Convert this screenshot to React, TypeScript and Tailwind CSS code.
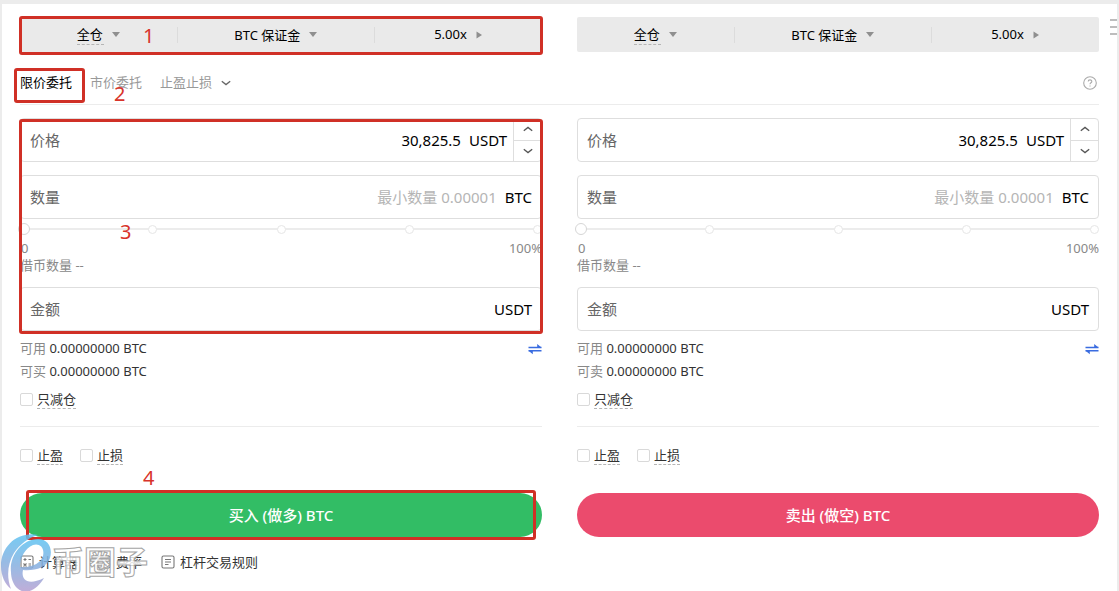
import { useState } from 'react';
import type { ReactNode } from 'react';

type Side = 'buy' | 'sell';

const sides: Record<Side, { max: string; submit: string; color: string }> = {
  buy: { max: '可买', submit: '买入 (做多) BTC', color: 'bg-[#32bd65]' },
  sell: { max: '可卖', submit: '卖出 (做空) BTC', color: 'bg-[#eb4b6d]' },
};

const sliderStops = [0, 25, 50, 75, 100];

/* Small filled triangle used by the margin selectors */
function Caret({ right = false }: { right?: boolean }) {
  return (
    <svg className="pointer-events-none h-2 w-2 shrink-0 text-[#8f8f8f]" viewBox="0 0 8 8" fill="currentColor" aria-hidden="true">
      {right ? <path d="M1.5 0.5 7 4 1.5 7.5z" /> : <path d="M0 1 8 1 4 6z" />}
    </svg>
  );
}

function Chevron({ up = false }: { up?: boolean }) {
  return (
    <svg className="h-[10px] w-[10px] shrink-0" viewBox="0 0 10 10" fill="none" stroke="currentColor" strokeWidth={1.3} aria-hidden="true">
      <path d={up ? 'M0.8 6.8 5 3.4 9.2 6.8' : 'M0.8 3.2 5 6.6 9.2 3.2'} />
    </svg>
  );
}

/* Numbered red callout frame, sized by the positioned parent */
function Mark({ label, frame, at }: { label: string; frame: string; at: string }) {
  return (
    <div className={`pointer-events-none absolute z-10 rounded-[3px] border-3 border-[#d03026] ${frame}`}>
      <span className={`absolute text-[20px] leading-6 text-[#d8332a] ${at}`}>{label}</span>
    </div>
  );
}

function MarginBar({ side }: { side: Side }) {
  return (
    <div className="relative">
      <div className="grid h-[35px] grid-cols-[30fr_38fr_32fr] items-center rounded-xs bg-[#eaeaea] text-black">
        <div className="flex items-center justify-center gap-2">
          <select
            aria-label="保证金模式"
            className="h-5 cursor-pointer appearance-none border-b border-dashed border-[#b5b5b5] bg-transparent leading-4"
          >
            <option>全仓</option>
          </select>
          <Caret />
        </div>
        <div className="flex h-4 items-center justify-center gap-2 border-x border-[#dcdcdc]">
          <select aria-label="保证金币种" className="cursor-pointer appearance-none bg-transparent leading-5">
            <option>BTC 保证金</option>
          </select>
          <Caret />
        </div>
        <button type="button" className="flex items-center justify-center gap-2">
          5.00x
          <Caret right />
        </button>
      </div>
      {side === 'buy' && <Mark label="1" frame="-inset-x-px -top-px -bottom-[3px]" at="left-[121px] top-[5px]" />}
    </div>
  );
}

function Field({ id, label, unit, children, steps }: {
  id: string;
  label: string;
  unit: string;
  children: ReactNode;
  steps?: ReactNode;
}) {
  return (
    <div className="flex h-11 items-stretch rounded-sm border border-[#dedede] text-[15px]">
      <label htmlFor={id} className="flex shrink-0 items-center pl-[9px] text-[#666]">{label}</label>
      <div className="flex min-w-0 flex-1 items-center">{children}</div>
      <span className={`flex items-center pl-2 text-black ${steps ? 'pr-[6px]' : 'pr-[9px]'}`}>{unit}</span>
      {steps}
    </div>
  );
}

function Check({ label }: { label: string }) {
  return (
    <label className="flex items-center gap-1 text-[#333]">
      <input type="checkbox" className="h-[13px] w-[13px] appearance-none rounded-xs border border-[#d9d9d9] bg-white checked:bg-[#333]" />
      <span className="border-b border-dashed border-[#b5b5b5] leading-[18px]">{label}</span>
    </label>
  );
}

function OrderForm({ side }: { side: Side }) {
  const [price, setPrice] = useState(30825.5);
  const [amount, setAmount] = useState('');
  const [total, setTotal] = useState('');
  const [percent, setPercent] = useState(0);
  const { max, submit, color } = sides[side];
  const inputClass = 'w-full min-w-0 bg-transparent text-right text-black outline-none placeholder:text-[#b5b5b5]';

  return (
    <form onSubmit={(e) => e.preventDefault()}>
      <div className="relative">
        <Field
          id={`${side}-price`}
          label="价格"
          unit="USDT"
          steps={
            <div className="flex w-7 flex-col border-l border-[#dedede] text-[#555]">
              <button
                type="button"
                aria-label="加"
                onClick={() => setPrice(price + 0.1)}
                className="flex flex-1 items-center justify-center border-b border-[#dedede]"
              >
                <Chevron up />
              </button>
              <button type="button" aria-label="减" onClick={() => setPrice(price - 0.1)} className="flex flex-1 items-center justify-center">
                <Chevron />
              </button>
            </div>
          }
        >
          <input
            id={`${side}-price`}
            className={inputClass}
            value={price.toLocaleString('en-US', { maximumFractionDigits: 1 })}
            onChange={(e) => setPrice(Number(e.target.value.replace(/,/g, '')) || 0)}
          />
        </Field>

        <div className="mt-[13px]">
          <Field id={`${side}-amount`} label="数量" unit="BTC">
            <input
              id={`${side}-amount`}
              className={inputClass}
              placeholder="最小数量 0.00001"
              value={amount}
              onChange={(e) => setAmount(e.target.value)}
            />
          </Field>
        </div>

        {/* Percent slider */}
        <div className="relative mt-1 -ml-[2px] flex h-3 items-center">
          <div className="absolute inset-x-1 h-[2px] bg-[#ececec]" />
          <div className="absolute inset-x-0 flex items-center justify-between pl-[2px]">
            {sliderStops.map((stop) => (
              <span key={stop} className="h-[9px] w-[9px] rounded-full border border-[#e6e6e6] bg-white" />
            ))}
          </div>
          <input
            type="range"
            aria-label="仓位百分比"
            value={percent}
            onChange={(e) => setPercent(Number(e.target.value))}
            className="relative h-3 w-full cursor-pointer appearance-none bg-transparent [&::-webkit-slider-thumb]:h-3 [&::-webkit-slider-thumb]:w-3 [&::-webkit-slider-thumb]:appearance-none [&::-webkit-slider-thumb]:rounded-full [&::-webkit-slider-thumb]:border [&::-webkit-slider-thumb]:border-[#d6d6d6] [&::-webkit-slider-thumb]:bg-white"
          />
        </div>
        <div className="mt-1 flex justify-between pl-px leading-[18px] text-[#888]">
          <span>0</span>
          <span>100%</span>
        </div>
        <p className="leading-4 text-[#888]">借币数量 --</p>

        <div className="mt-[14px]">
          <Field id={`${side}-total`} label="金额" unit="USDT">
            <input id={`${side}-total`} className={inputClass} value={total} onChange={(e) => setTotal(e.target.value)} />
          </Field>
        </div>
        {side === 'buy' && <Mark label="3" frame="-inset-x-px top-px -bottom-[3px]" at="left-[98px] top-[98px]" />}
      </div>

      {/* Balances */}
      <div className="mt-[6px] flex items-center justify-between leading-[23px]">
        <span className="text-[#333]"><span className="text-[#888]">可用</span> 0.00000000 BTC</span>
        <button type="button" aria-label="划转" className="text-[#3a6ce0]">
          <svg className="h-3 w-[14px]" viewBox="0 0 14 12" fill="none" stroke="currentColor" strokeWidth={1.5} aria-hidden="true">
            <path d="M0.5 4.4H13.5M0.5 7.8H13.5" />
            <path d="M9.2 1 13.5 4.4H9.2zM4.8 11.2 0.5 7.8H4.8z" fill="currentColor" stroke="none" />
          </svg>
        </button>
      </div>
      <p className="leading-[23px] text-[#333]"><span className="text-[#888]">{max}</span> 0.00000000 BTC</p>

      <div className="mt-[7px] flex">
        <Check label="只减仓" />
      </div>
      <div className="mt-[17px] flex gap-[17px] border-t border-[#ececec] pt-[19px]">
        <Check label="止盈" />
        <Check label="止损" />
      </div>

      <div className="relative mt-7">
        <button type="submit" className={`h-11 w-full rounded-full text-[15px] font-medium text-white ${color}`}>
          {submit}
        </button>
        {side === 'buy' && <Mark label="4" frame="left-[6px] right-[6px] -top-[3px] -bottom-[3px]" at="left-[114px] -top-[27px]" />}
      </div>
    </form>
  );
}

function FooterLink({ label, children }: { label: string; children: ReactNode }) {
  return (
    <a href="#" className="flex items-center gap-[5px] text-[#333]">
      <svg className="h-[14px] w-[14px] text-[#777]" viewBox="0 0 14 14" fill="none" stroke="currentColor" strokeWidth={1.1} aria-hidden="true">
        <rect x="1" y="1" width="12" height="12" rx="1.5" />
        {children}
      </svg>
      {label}
    </a>
  );
}

/* Site stamp laid over the bottom-left corner */
function Watermark() {
  return (
    <div className="pointer-events-none absolute -left-5 -top-5 z-20 flex items-center" aria-hidden="true">
      <svg className="h-[60px] w-[52px] shrink-0" viewBox="0 0 52 60">
        <defs>
          <linearGradient id="stamp" x1="0" y1="0" x2="0" y2="1">
            <stop offset="0" stopColor="#5fc3f2" />
            <stop offset="0.5" stopColor="#86b0e0" />
            <stop offset="1" stopColor="#b5a0d2" />
          </linearGradient>
        </defs>
        <g fill="url(#stamp)" opacity="0.85">
          <path d="M38 3C18-1 1 14 1 34C1 44 5 52 11 57C6 44 8 31 14 21C20 12 28 6 38 3Z" />
          <path d="M11 40C9 24 22 7 38 7C48 7 53 16 50 26C47 36 34 39 23 38C21 46 26 55 44 46C36 60 24 63 17 56C13 52 11 46 11 40ZM20 35C32 36 41 31 43 24C45 15 39 11 33 13C25 16 20 26 20 35Z" fillRule="evenodd" />
        </g>
      </svg>
      <span className="text-[32px] font-bold leading-10 text-white/80 [-webkit-text-stroke:1px_#a5a5a5]">币圈子</span>
    </div>
  );
}

export default function App() {
  return (
    <div className="flex min-h-screen border-r-2 border-l-2 border-t-4 border-[#ececec] bg-white font-['Noto_Sans','Noto_Sans_CJK_SC',sans-serif] text-[13px]">
      <main className="min-w-0 flex-1 pt-[13px] pl-[18px]">
        <div className="grid grid-cols-2 gap-[35px]">
          <MarginBar side="buy" />
          <MarginBar side="sell" />
        </div>

        {/* Order types */}
        <div className="flex h-[53px] items-center justify-between border-b border-[#ececec] pt-[10px] text-[#999]">
          <nav className="flex items-center gap-[18px]" aria-label="委托类型">
            <div className="relative">
              <button type="button" className="text-black">限价委托</button>
              <Mark label="2" frame="-left-[6px] -right-[13px] -top-[5px] -bottom-[10px]" at="left-[97px] top-[11px]" />
            </div>
            <button type="button">市价委托</button>
            <div className="flex items-center gap-2">
              <select aria-label="止盈止损" className="cursor-pointer appearance-none bg-transparent">
                <option>止盈止损</option>
              </select>
              <span className="text-[#666]"><Chevron /></span>
            </div>
          </nav>
          <button type="button" aria-label="帮助" className="mr-[2px]">
            <svg className="h-[14px] w-[14px] text-[#aaa]" viewBox="0 0 14 14" fill="none" stroke="currentColor" strokeWidth={1.1} aria-hidden="true">
              <circle cx="7" cy="7" r="6.3" />
              <path d="M5.2 5.6C5.2 3.3 8.8 3.3 8.8 5.5C8.8 6.8 7 6.8 7 8.3M7 9.4V10.5" />
            </svg>
          </button>
        </div>

        <div className="grid grid-cols-2 gap-[35px] pt-[13px]">
          <OrderForm side="buy" />
          <OrderForm side="sell" />
        </div>

        <footer className="relative mt-[15px] flex gap-[19px] leading-5">
          <FooterLink label="计算器">
            <path d="M3.5 4.5h3M5 3v3M8.5 4.5h2.5M3.5 8.5l3 3M6.5 8.5l-3 3M8.5 9h2.5M8.5 11h2.5" />
          </FooterLink>
          <FooterLink label="费率">
            <path d="M4 10 10 4M4 4.5h1.5M8.5 9.5H10" />
          </FooterLink>
          <FooterLink label="杠杆交易规则">
            <path d="M4 4.5h6M4 7h6M4 9.5h3.5" />
          </FooterLink>
          <Watermark />
        </footer>
      </main>

      <aside className="ml-[11px] pt-[15px]">
        <button type="button" aria-label="菜单" className="flex w-[7px] flex-col gap-[5px]">
          <span className="h-[2px] w-full bg-[#bdbdbd]" />
          <span className="h-[2px] w-full bg-[#bdbdbd]" />
          <span className="h-[2px] w-full bg-[#bdbdbd]" />
        </button>
      </aside>
    </div>
  );
}
